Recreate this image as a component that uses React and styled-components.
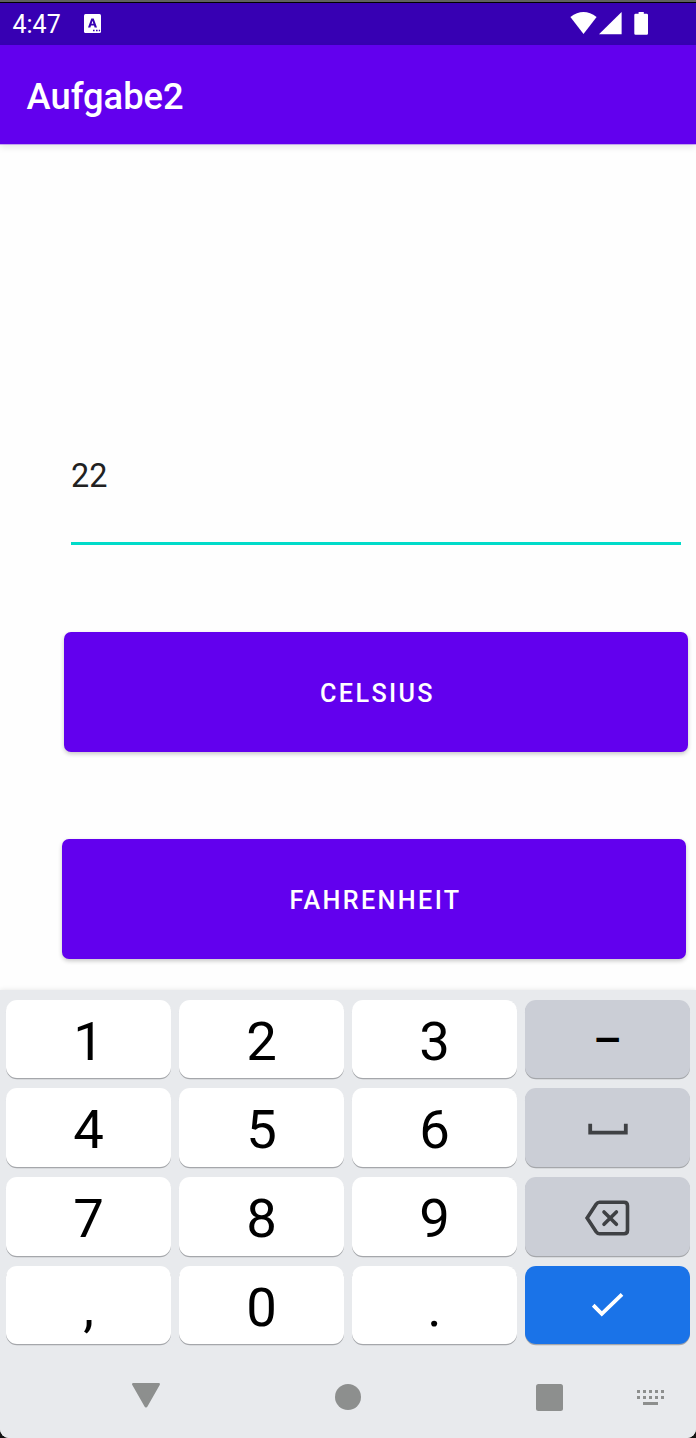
import React from "react";
import styled, { createGlobalStyle } from "styled-components";

const GlobalStyle = createGlobalStyle`
  * { box-sizing: border-box; }
  body { margin: 0; background: #141414; font-family: Roboto, sans-serif; }
  svg { display: block; }
`;

const Screen = styled.div`
  width: 696px;
  height: 1438px;
  display: flex;
  flex-direction: column;
  overflow: hidden;
  background: #fefefe;
  border-top: 2px solid #606060;
  border-radius: 0 0 9px 9px;
`;

const StatusBar = styled.header`
  height: 43px;
  flex: none;
  display: flex;
  align-items: center;
  padding: 0 47px 0 12.5px;
  border-top: 1px solid #000;
  background: #3700b3;
  color: #fff;
`;

const Clock = styled.time`
  width: 71.5px;
  padding-top: 1px;
  font-size: 25px;
  line-height: 30px;
`;

const StatusIcons = styled.div`
  display: flex;
  margin-left: auto;
  padding-bottom: 2px;
`;

const AppBar = styled.div`
  position: relative;
  height: 99.3px;
  flex: none;
  display: flex;
  align-items: center;
  padding: 4px 26.6px 0;
  background: #6200ee;
  box-shadow: 0 1px 0 rgba(98, 0, 238, 0.3), 0 3px 7px rgba(0, 0, 0, 0.1);
`;

const Title = styled.h1`
  margin: 0;
  color: #fff;
  font-size: 36.3px;
  font-weight: 500;
  line-height: 44px;
`;

const Content = styled.main`
  height: 845.7px;
  flex: none;
  display: flex;
  flex-direction: column;
  padding-top: 309.7px;
`;

const Input = styled.input`
  width: 610px;
  height: 91px;
  margin: 0 0 87px 71px;
  padding: 1px 0 45px;
  border: 0;
  border-bottom: 3px solid #00dbc9;
  border-radius: 0;
  outline: none;
  background: transparent;
  color: #212121;
  font: 400 32.4px/42px Roboto, sans-serif;
`;

const Button = styled.button`
  width: 624px;
  height: 120px;
  flex: none;
  margin: 0 0 ${(p) => p.$gap}px ${(p) => p.$left}px;
  padding: 4.4px 0 0 3px;
  border: 0;
  border-radius: 7px;
  background: #6200ee;
  box-shadow: 0 2px 4px rgba(0, 0, 0, 0.22);
  color: #fff;
  font: 500 25.2px/30px Roboto, sans-serif;
  letter-spacing: 2.35px;
  text-transform: uppercase;
`;

const Keyboard = styled.section`
  position: relative;
  height: 448px;
  flex: none;
  background: #e8eaed;
  box-shadow: 0 0 5px rgba(0, 0, 0, 0.1);
`;

const Keys = styled.div`
  display: grid;
  grid-template-columns: repeat(4, 165px);
  grid-template-rows: 78px 78.6px 78.4px 78px;
  gap: 10.4px 8px;
  padding: 10px 6px 0;
`;

const keyColors = { digit: "#fff", action: "#cbced6", enter: "#1a73e8" };
const keyInsets = { digit: 3.4, action: 2.6, enter: 0.4 };

const Key = styled.button`
  display: flex;
  align-items: center;
  justify-content: center;
  padding: ${(p) => keyInsets[p.$kind]}px 0 0;
  border: 0;
  border-radius: 11px;
  background: ${(p) => keyColors[p.$kind]};
  box-shadow: 0 1.2px 0.5px #a5a7ab;
  color: #000;
  font: 400 54.5px/60px Roboto, sans-serif;
`;

const Dash = styled.span`
  padding-top: 2px;
  font-size: 45px;
  font-weight: 500;
  line-height: 60px;
`;

const Navigation = styled.nav`
  display: flex;
  align-items: center;
  height: 28px;
  margin: 39.2px 31px 0 131px;
`;

const NavIcon = styled.span`
  margin-right: ${(p) => p.$after || 0}px;
`;

const Icon = ({ w, h, children }) => (
  <svg width={w} height={h} viewBox={`0 0 ${w} ${h}`} aria-hidden="true">
    {children}
  </svg>
);

const KeyboardBadge = () => (
  <Icon w={17} h={20}>
    <rect y="0" width="17" height="19" rx="1.5" fill="#fff" />
    <path
      d="M4 13.4 7.3 4.4h2.4l3.3 9h-2.4l-.6-1.8H7l-.6 1.8ZM7.6 9.7h1.8l-.9-2.9Z"
      fill="#3700b3"
    />
    <path d="M9 16.5h1.6M12 16.5h1.6M14.8 16.5h1.3" stroke="#3700b3" strokeWidth="1.3" />
  </Icon>
);

const Signals = () => (
  <Icon w={79} h={23}>
    <g fill="#fff">
      <path d="M.4 5Q13.5-5 26.6 5L13.5 22Z" />
      <path d="M29 22.3 51.6 0V22.3Z" />
      <path d="M68.6 0h5.2v1.8H76.7q1.3 0 1.3 1.3v18.4q0 1.3-1.3 1.3H65.6q-1.3 0-1.3-1.3V3.1q0-1.3 1.3-1.3h3Z" />
    </g>
  </Icon>
);

const SpaceIcon = () => (
  <Icon w={40} h={12}>
    <path d="M2.2 .8v8.9h35.6V.8" fill="none" stroke="#3f4144" strokeWidth="3.8" />
  </Icon>
);

const BackspaceIcon = () => (
  <Icon w={48} h={36}>
    <g fill="none" stroke="#3f4144" strokeWidth="3.6">
      <path d="M15.5 2.2H40Q43.5 2.2 43.5 5.7v24.6Q43.5 33.8 40 33.8H15.5Q13.5 33.8 12.1 31.8L3.1 18 12.1 4.2Q13.5 2.2 15.5 2.2Z" />
      <path d="m20 11.9 12.4 12.4M32.4 11.9 20 24.3" strokeLinecap="round" />
    </g>
  </Icon>
);

const CheckIcon = () => (
  <Icon w={32} h={24}>
    <path d="m1.2 12.2 8.6 8.6L30 1.4" fill="none" stroke="#fff" strokeWidth="3.8" />
  </Icon>
);

const dots = [0, 6, 12, 18, 24];

const keys = [
  ["1"], ["2"], ["3"], [<Dash>–</Dash>, "action"],
  ["4"], ["5"], ["6"], [<SpaceIcon />, "action", "Space"],
  ["7"], ["8"], ["9"], [<BackspaceIcon />, "action", "Backspace"],
  [","], ["0"], ["."], [<CheckIcon />, "enter", "Done"],
];

export default function App() {
  return (
    <>
      <GlobalStyle />
      <Screen>
        <StatusBar>
          <Clock>4:47</Clock>
          <KeyboardBadge />
          <StatusIcons>
            <Signals />
          </StatusIcons>
        </StatusBar>
        <AppBar>
          <Title>Aufgabe2</Title>
        </AppBar>
        <Content>
          <Input defaultValue="22" inputMode="decimal" />
          <Button $left={64} $gap={87}>Celsius</Button>
          <Button $left={62} $gap={0}>Fahrenheit</Button>
        </Content>
        <Keyboard>
          <Keys>
            {keys.map(([face, kind = "digit", label], i) => (
              <Key key={i} $kind={kind} aria-label={label}>
                {face}
              </Key>
            ))}
          </Keys>
          <Navigation>
            <NavIcon $after={174}>
              <Icon w={30} h={28}>
                <path
                  d="M2.6 1.8H27.4L15 23.5Z"
                  transform="translate(0 -.5)"
                  fill="#8d8f8e"
                  stroke="#8d8f8e"
                  strokeWidth="3"
                  strokeLinejoin="round"
                />
              </Icon>
            </NavIcon>
            <NavIcon $after={175}>
              <Icon w={26} h={26}>
                <circle cx="13" cy="13" r="13" fill="#8d8f8e" />
              </Icon>
            </NavIcon>
            <NavIcon $after={74}>
              <Icon w={27} h={27}>
                <rect width="27" height="27" rx="2.5" fill="#8d8f8e" />
              </Icon>
            </NavIcon>
            <NavIcon>
              <Icon w={28} h={15}>
                <g fill="#8d8f8e">
                  {dots.map((x) => (
                    <path key={x} d={`M${x} 0h3v3h-3zM${x} 6h3v3h-3z`} />
                  ))}
                  <path d="M6 12h15v3H6z" />
                </g>
              </Icon>
            </NavIcon>
          </Navigation>
        </Keyboard>
      </Screen>
    </>
  );
}
